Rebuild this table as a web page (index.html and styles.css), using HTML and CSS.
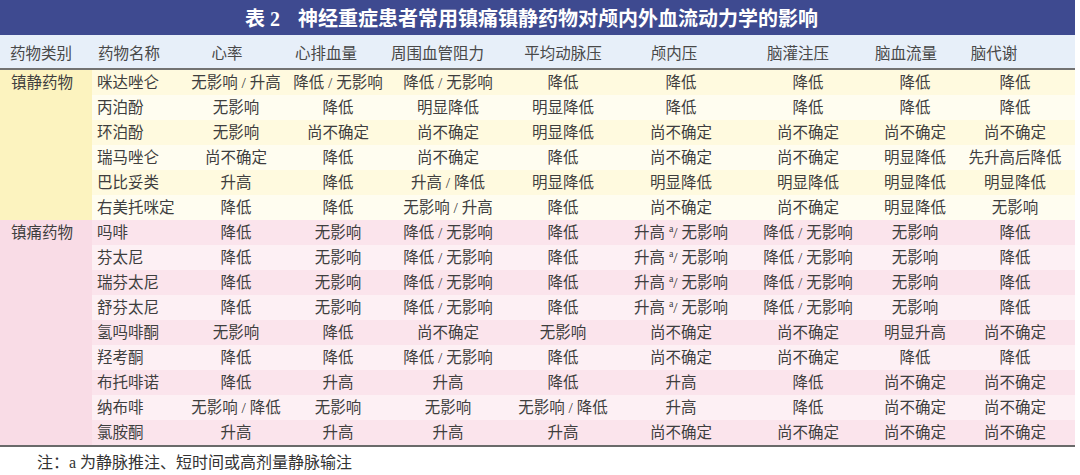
FILE: index.html
```html
<!DOCTYPE html>
<html lang="zh-CN">
<head>
<meta charset="utf-8">
<title>表 2</title>
<link rel="stylesheet" href="styles.css">
</head>
<body>
<div class="table">
  <div class="title"><span class="tno">表 2</span>神经重症患者常用镇痛镇静药物对颅内外血流动力学的影响</div>
  <div class="head">
    <div class="hl cat-h">药物类别</div>
    <div class="hl name-h">药物名称</div>
    <div class="hc s9">心率</div>
    <div class="hc s12">心排血量</div>
    <div class="hc s14">周围血管阻力</div>
    <div class="hc">平均动脉压</div>
    <div class="hc s7">颅内压</div>
    <div class="hc s10">脑灌注压</div>
    <div class="hc s13">脑血流量</div>
    <div class="hc s21">脑代谢</div>
  </div>
  <div class="group sed">
    <div class="cat">镇静药物</div>
    <div class="rows">
      <div class="row"><div class="name">咪达唑仑</div><div>无影响 / 升高</div><div>降低 / 无影响</div><div>降低 / 无影响</div><div>降低</div><div>降低</div><div>降低</div><div>降低</div><div>降低</div></div>
      <div class="row"><div class="name">丙泊酚</div><div>无影响</div><div>降低</div><div>明显降低</div><div>明显降低</div><div>降低</div><div>降低</div><div>降低</div><div>降低</div></div>
      <div class="row"><div class="name">环泊酚</div><div>无影响</div><div>尚不确定</div><div>尚不确定</div><div>明显降低</div><div>尚不确定</div><div>尚不确定</div><div>尚不确定</div><div>尚不确定</div></div>
      <div class="row"><div class="name">瑞马唑仑</div><div>尚不确定</div><div>降低</div><div>尚不确定</div><div>降低</div><div>尚不确定</div><div>尚不确定</div><div>明显降低</div><div>先升高后降低</div></div>
      <div class="row"><div class="name">巴比妥类</div><div>升高</div><div>降低</div><div>升高 / 降低</div><div>明显降低</div><div>明显降低</div><div>明显降低</div><div>明显降低</div><div>明显降低</div></div>
      <div class="row"><div class="name">右美托咪定</div><div>降低</div><div>降低</div><div>无影响 / 升高</div><div>降低</div><div>尚不确定</div><div>尚不确定</div><div>明显降低</div><div>无影响</div></div>
    </div>
  </div>
  <div class="group ana">
    <div class="cat">镇痛药物</div>
    <div class="rows">
      <div class="row"><div class="name">吗啡</div><div>降低</div><div>无影响</div><div>降低 / 无影响</div><div>降低</div><div>升高 <sup>a</sup>/ 无影响</div><div>降低 / 无影响</div><div>无影响</div><div>降低</div></div>
      <div class="row"><div class="name">芬太尼</div><div>降低</div><div>无影响</div><div>降低 / 无影响</div><div>降低</div><div>升高 <sup>a</sup>/ 无影响</div><div>降低 / 无影响</div><div>无影响</div><div>降低</div></div>
      <div class="row"><div class="name">瑞芬太尼</div><div>降低</div><div>无影响</div><div>降低 / 无影响</div><div>降低</div><div>升高 <sup>a</sup>/ 无影响</div><div>降低 / 无影响</div><div>无影响</div><div>降低</div></div>
      <div class="row"><div class="name">舒芬太尼</div><div>降低</div><div>无影响</div><div>降低 / 无影响</div><div>降低</div><div>升高 <sup>a</sup>/ 无影响</div><div>降低 / 无影响</div><div>无影响</div><div>降低</div></div>
      <div class="row"><div class="name">氢吗啡酮</div><div>无影响</div><div>降低</div><div>尚不确定</div><div>无影响</div><div>尚不确定</div><div>尚不确定</div><div>明显升高</div><div>尚不确定</div></div>
      <div class="row"><div class="name">羟考酮</div><div>降低</div><div>降低</div><div>降低 / 无影响</div><div>降低</div><div>尚不确定</div><div>尚不确定</div><div>降低</div><div>降低</div></div>
      <div class="row"><div class="name">布托啡诺</div><div>降低</div><div>升高</div><div>升高</div><div>降低</div><div>升高</div><div>降低</div><div>尚不确定</div><div>尚不确定</div></div>
      <div class="row"><div class="name">纳布啡</div><div>无影响 / 降低</div><div>无影响</div><div>无影响</div><div>无影响 / 降低</div><div>升高</div><div>降低</div><div>尚不确定</div><div>尚不确定</div></div>
      <div class="row"><div class="name">氯胺酮</div><div>升高</div><div>升高</div><div>升高</div><div>升高</div><div>尚不确定</div><div>尚不确定</div><div>尚不确定</div><div>尚不确定</div></div>
    </div>
  </div>
</div>
<div class="note">注：a 为静脉推注、短时间或高剂量静脉输注</div>
</body>
</html>
```

FILE: styles.css
```css
html, body {
  margin: 0;
  padding: 0;
  background: #ffffff;
}
body {
  width: 1080px;
  height: 475px;
  overflow: hidden;
  font-family: "Liberation Serif", "Noto Sans CJK SC", serif;
  color: #3e3e3e;
}
.table {
  width: 1075px;
  border-bottom: 2px solid #6a6a6a;
}
.title {
  height: 35px;
  background: #3e4a90;
  color: #ffffff;
  font-weight: bold;
  font-size: 20px;
  display: flex;
  align-items: center;
  justify-content: center;
  padding-right: 12px;
  box-sizing: border-box;
}
.tno {
  margin-right: 18px;
}
.head {
  display: grid;
  grid-template-columns: 92px 95px 98px 106px 114px 116px 120px 134px 80px 120px;
  height: 33px;
  background: #e7eff9;
  align-items: center;
  font-size: 15.5px;
  color: #484848;
  border-bottom: 2px solid #727272;
}
.hl {
  text-align: left;
}
.cat-h {
  padding-left: 10px;
}
.name-h {
  padding-left: 6px;
}
.hc {
  text-align: center;
  white-space: nowrap;
}
.s7 { padding-right: 14px; }
.s9 { padding-right: 18px; }
.s10 { padding-right: 20px; }
.s12 { padding-right: 24px; }
.s13 { padding-right: 26px; }
.s14 { padding-right: 28px; }
.s21 { padding-right: 42px; }
.group {
  display: flex;
}
.cat {
  width: 92px;
  flex: none;
  box-sizing: border-box;
  padding-left: 11px;
  font-size: 15.5px;
  line-height: 25px;
}
.rows {
  flex: 1;
}
.row {
  display: grid;
  grid-template-columns: 95px 98px 106px 114px 116px 120px 134px 80px 120px;
  height: 25px;
  line-height: 25px;
  font-size: 15.5px;
  text-align: center;
  white-space: nowrap;
}
.row .name {
  text-align: left;
  padding-left: 5px;
}
.row sup {
  font-size: 10px;
  line-height: 0;
  vertical-align: 6px;
}
.sed .cat {
  background: #fcf3bf;
}
.sed .row:nth-child(odd) {
  background: #fffadf;
}
.sed .row:nth-child(even) {
  background: #fffdf0;
}
.ana .cat {
  background: #f9dce6;
}
.ana .row:nth-child(odd) {
  background: #fbe4ec;
}
.ana .row:nth-child(even) {
  background: #fdf0f4;
}
.note {
  padding: 4px 0 0 37px;
  font-size: 16px;
  line-height: 24px;
  color: #333333;
}
```
